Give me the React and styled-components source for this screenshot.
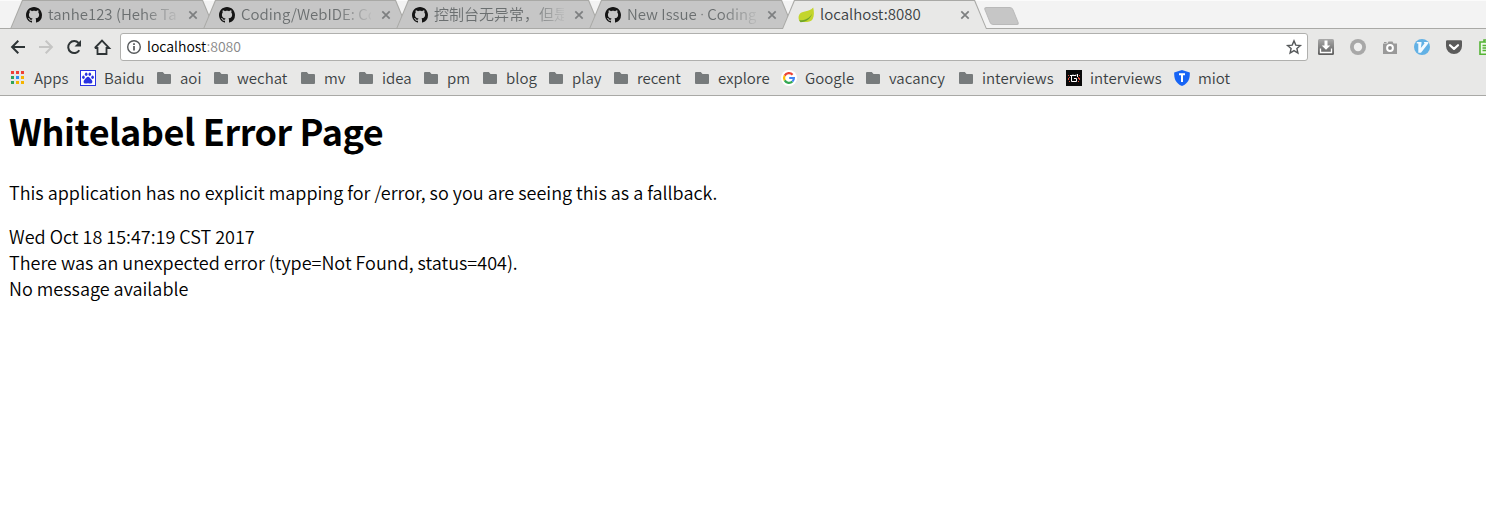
import React from "react";
import styled, { createGlobalStyle } from "styled-components";

const uiFont = '"Noto Sans CJK SC", "Noto Sans", sans-serif';

const GlobalStyle = createGlobalStyle`
  * { box-sizing: border-box; }
  body { margin: 0; background: #fff; overflow: hidden; font-family: ${uiFont}; font-weight: 350; }
`;

const Browser = styled.div`
  width: 100%;
  height: 100vh;
  display: flex;
  flex-direction: column;
  overflow: hidden;
`;

const TabStrip = styled.header`
  display: flex;
  flex: none;
  height: 29px;
  padding-left: 10px;
  background: #f3f3f3;
  box-shadow: inset 0 1px #fbfbfb, inset 0 -1px #a9a9a6;
`;

const TabItem = styled.div`
  position: relative;
  z-index: ${(p) => (p.$active ? 2 : 1)};
  flex: none;
  display: flex;
  align-items: center;
  width: 205px;
  height: 29px;
  margin-right: -12px;
  padding: 0 14px 0 16px;
  color: ${(p) => (p.$active ? "#3a4042" : "#6b6f70")};

  &::before, &::after {
    content: "";
    position: absolute;
    inset: 0;
    z-index: -1;
  }
  &::before {
    background: #a9a9a6;
    clip-path: polygon(0 100%, 12px 0, 193px 0, 100% 100%);
  }
  &::after {
    background: ${(p) => (p.$active ? "#e8e8e7" : "#c6c6c6")};
    clip-path: ${(p) =>
      p.$active
        ? "polygon(1px 100%, 12.8px 1px, 192.2px 1px, 204px 100%)"
        : "polygon(1.4px 28px, 12.8px 1px, 192.2px 1px, 203.6px 28px)"};
  }
`;

const TabTitle = styled.span`
  width: 132px;
  margin: 0 7px 1px 6px;
  overflow: hidden;
  white-space: nowrap;
  font-size: 15px;
  line-height: 24px;
  ${(p) => p.$fade && "mask-image: linear-gradient(to right, #000 94px, transparent 134px);"}
`;

const Dot = styled.span`
  font-family: "Noto Sans", sans-serif;
`;

const NewTab = styled.div`
  width: 29px;
  height: 18px;
  margin: 7px 0 0 12px;
  border-radius: 3px;
  background: #c6c6c6;
  border: 1px solid #b9b9b9;
  transform: skewX(22deg);
`;

const Toolbar = styled.div`
  display: flex;
  flex: none;
  align-items: center;
  height: 36px;
  padding-left: 10px;
  background: #e8e8e7;
`;

const NavButtons = styled.nav`
  display: flex;
  flex: none;
  gap: 12px;
  width: 110px;
`;

const AddressBar = styled.div`
  display: flex;
  flex: none;
  align-items: center;
  width: 1188px;
  height: 28px;
  padding: 0 5px;
  border: 1px solid #b0b0ae;
  border-radius: 3px;
  background: #fff;
`;

const Url = styled.span`
  flex: 1;
  margin: 0 0 2px 5px;
  font-size: 14px;
  line-height: 20px;
  color: #000;
`;

const Port = styled.span`
  color: #888;
`;

const Extensions = styled.div`
  display: flex;
  flex: none;
  gap: 16px;
  margin-left: 10px;
`;

const BookmarksBar = styled.div`
  display: flex;
  flex: none;
  align-items: center;
  height: 31px;
  padding: 0 0 4px 10px;
  background: #e8e8e7;
  border-bottom: 1px solid #a9a9a6;
`;

const BookmarkItem = styled.div`
  display: flex;
  flex: none;
  align-items: center;
  gap: 8px;
  width: ${(p) => p.$width}px;
  color: #3a4042;
  font-size: 15px;
  line-height: 24px;
  white-space: nowrap;
`;

const Glyph = styled.svg`
  display: block;
  flex: none;
  width: 16px;
  height: 16px;
  overflow: visible;
`;

const Page = styled.main`
  flex: 1;
  padding: 0 9px;
  color: #000;
  font-size: 18px;
  line-height: 26px;
`;

const Heading = styled.h1`
  margin: 8px 0 22px;
  font-size: 36px;
  line-height: 53px;
  font-weight: 700;
  letter-spacing: -0.44px;
`;

const Paragraph = styled.p`
  margin: 0 0 18px;
`;

const GitHubIcon = () => (
  <Glyph viewBox="0 0 16 16">
    <path fill="#151515" d="M8 0C3.58 0 0 3.58 0 8c0 3.54 2.29 6.53 5.47 7.59.4.07.55-.17.55-.38 0-.19-.01-.82-.01-1.49-2.01.37-2.53-.49-2.69-.94-.09-.23-.48-.94-.82-1.13-.28-.15-.68-.52-.01-.53.63-.01 1.08.58 1.23.82.72 1.21 1.87.87 2.33.66.07-.52.28-.87.51-1.07-1.78-.2-3.64-.89-3.64-3.95 0-.87.31-1.59.82-2.15-.08-.2-.36-1.02.08-2.12 0 0 .67-.21 2.2.82.64-.18 1.32-.27 2-.27s1.36.09 2 .27c1.53-1.04 2.2-.82 2.2-.82.44 1.1.16 1.92.08 2.12.51.56.82 1.27.82 2.15 0 3.07-1.87 3.75-3.65 3.95.29.25.54.73.54 1.48 0 1.07-.01 1.93-.01 2.2 0 .21.15.46.55.38A8.01 8.01 0 0 0 16 8c0-4.42-3.58-8-8-8z" />
  </Glyph>
);

const LeafIcon = () => (
  <Glyph viewBox="0 0 16 16">
    <path fill="#c3d52c" d="M15.200 .6c.9 3.700 1.200 8.500-.6 11.600-2 3.200-7.600 3-12.600 2.600C.2 13 .1 9.300 1.500 7.300 4 3.800 11.500 5.200 15.200 .6z" />
    <path fill="#6ea52b" d="M1.200 13.300c5 .3 9.800-1.300 12.800-6.500-1.300 5-5.500 8-11.500 8.500z" />
  </Glyph>
);

const CloseIcon = () => (
  <Glyph viewBox="0 0 16 16">
    <path d="M4.300 4.300l7.400 7.400M11.700 4.300l-7.400 7.400" stroke="#7d7f80" strokeWidth="1.700" />
  </Glyph>
);

const BackIcon = ({ color = "#2e3436", flip = false }) => (
  <Glyph viewBox="0 0 16 16">
    <path transform={flip ? "matrix(-1 0 0 1 16 0)" : undefined} d="M15 8H2.500M8.300 1.800L2.100 8l6.200 6.200" fill="none" stroke={color} strokeWidth="2" />
  </Glyph>
);

const ReloadIcon = () => (
  <Glyph viewBox="0 0 16 16">
    <path d="M13.300 11.300A6 6 0 1 1 12.600 4" fill="none" stroke="#2e3436" strokeWidth="2" />
    <path d="M15 1v6.500H8.500z" fill="#2e3436" />
  </Glyph>
);

const HomeIcon = () => (
  <Glyph viewBox="0 0 16 16">
    <path d="M3.500 8v7h9V8M.8 9L8 1.600 15.200 9H12.500M3.500 9H.8" fill="none" stroke="#2e3436" strokeWidth="1.800" />
  </Glyph>
);

const InfoIcon = () => (
  <Glyph viewBox="0 0 16 16">
    <circle cx="8" cy="8" r="6.300" fill="none" stroke="#55585a" strokeWidth="1.400" />
    <path d="M8 7v4.500M8 4.300v1.700" stroke="#55585a" strokeWidth="1.700" />
  </Glyph>
);

const StarIcon = () => (
  <Glyph viewBox="0 0 16 16">
    <path d="M8 1.900l1.800 4.200 4.600.4-3.500 3 1 4.500L8 11.600 4.100 14l1-4.500-3.500-3 4.600-.4z" fill="none" stroke="#55585a" strokeWidth="1.400" />
  </Glyph>
);

const DownloadIcon = () => (
  <Glyph viewBox="0 0 16 16">
    <defs>
      <linearGradient id="dl" x2="0" y2="1">
        <stop stopColor="#aaa" />
        <stop offset="1" stopColor="#5c5c5c" />
      </linearGradient>
    </defs>
    <rect width="16" height="16" rx="1.500" fill="url(#dl)" />
    <path d="M6.500 1.500h3v5h2.800L8 10.800 3.700 6.500h2.800z" fill="#fff" />
    <path d="M2.500 9.500v4h11v-4" fill="none" stroke="#fff" strokeWidth="1.300" />
  </Glyph>
);

const RingIcon = () => (
  <Glyph viewBox="0 0 16 16">
    <circle cx="8" cy="8" r="8" fill="#a8a8a8" />
    <circle cx="8" cy="8" r="4.200" fill="#efefef" />
  </Glyph>
);

const CameraIcon = () => (
  <Glyph viewBox="0 0 16 16">
    <path d="M1.500 4.500h4l1-2h4l1 2h3.500v10.500h-14v-10zM2 3h2.500v1H2z" fill="#999" />
    <circle cx="8" cy="9" r="2.900" fill="#8a8a8a" stroke="#fff" strokeWidth="2" />
  </Glyph>
);

const VimIcon = () => (
  <Glyph viewBox="0 0 16 16">
    <circle cx="8" cy="8" r="8" fill="#62b1e5" />
    <path d="M2.800 3h4.700v1.500L6.800 9l3.700-4.500L9.800 3h4.400v1.600L7 13.800H4.300V4.500H2.800z" fill="#f4faff" />
  </Glyph>
);

const PocketIcon = () => (
  <Glyph viewBox="0 0 16 16">
    <path d="M1.200 1.300h13.600a1.200 1.200 0 0 1 1.200 1.200V7a8 8 0 0 1-16 0V2.500a1.200 1.200 0 0 1 1.200-1.200z" fill="#5b5b5b" />
    <path d="M4 6.200L8 9.900l4-3.700" fill="none" stroke="#fff" strokeWidth="2.200" strokeLinecap="round" strokeLinejoin="round" />
  </Glyph>
);

const ClipboardIcon = () => (
  <Glyph viewBox="0 0 16 16">
    <path d="M2 3h12v12.200H2zM6 3V1h4v2" fill="#eef7e9" stroke="#54b435" strokeWidth="1.600" />
    <path d="M4.500 6.500h7M4.500 9h7M4.500 11.500h7" stroke="#54b435" strokeWidth="1.300" />
  </Glyph>
);

const AppsIcon = () => {
  const colors = ["#ef4136", "#ef4136", "#ef4136", "#2fa35a", "#2f8ff0", "#f5b400", "#2fa35a", "#f5b400", "#f5b400"];
  return (
    <Glyph viewBox="0 0 16 16">
      {colors.map((c, i) => (
        <rect key={i} x={1 + (i % 3) * 5} y={1 + Math.floor(i / 3) * 5} width="3" height="3" fill={c} />
      ))}
    </Glyph>
  );
};

const BaiduIcon = () => (
  <Glyph viewBox="0 0 16 16">
    <rect x=".5" y=".5" width="15" height="15" fill="#fff" stroke="#2932e1" />
    <g fill="#2932e1">
      <ellipse cx="3.400" cy="7.200" rx="1.300" ry="1.700" />
      <ellipse cx="6.200" cy="4.200" rx="1.300" ry="1.800" />
      <ellipse cx="9.800" cy="4.200" rx="1.300" ry="1.800" />
      <ellipse cx="12.600" cy="7.200" rx="1.300" ry="1.700" />
      <path d="M8 6.800c1.500 0 2 1.500 3.300 2.600 1.800 1.600 1.200 4.100-.8 4.100-1 0-1.500-.3-2.500-.3s-1.500.3-2.500.3c-2 0-2.600-2.500-.8-4.100C6 8.300 6.500 6.800 8 6.800z" />
    </g>
  </Glyph>
);

const FolderIcon = () => (
  <Glyph viewBox="0 0 16 16">
    <path d="M2 2h4.800l1.700 2H14a1 1 0 0 1 1 1v8a1 1 0 0 1-1 1H2a1 1 0 0 1-1-1V3a1 1 0 0 1 1-1z" fill="#777b7c" />
  </Glyph>
);

const GoogleIcon = () => (
  <Glyph viewBox="0 0 16 16">
    <circle cx="8" cy="8" r="8" fill="#fff" />
    <g fill="none" strokeWidth="2.200">
      <path d="M3.700 5.600A4.900 4.900 0 0 1 11.600 4.700" stroke="#ea4335" />
      <path d="M3.700 5.600a4.900 4.900 0 0 0 0 4.800" stroke="#fbbc05" />
      <path d="M3.700 10.400a4.900 4.900 0 0 0 7.700 1.100" stroke="#34a853" />
      <path d="M11.400 11.500A4.900 4.900 0 0 0 12.900 8H8.200" stroke="#4285f4" />
    </g>
  </Glyph>
);

const PixelIcon = () => (
  <Glyph viewBox="0 0 16 16">
    <rect width="16" height="16" fill="#0a0a0a" />
    <path d="M4 5.500h3v-1M7 5.500h3v-1M5.500 5.500v6h5v-3H8M11.500 4v3" fill="none" stroke="#fff" />
    <path d="M2 5.500h1M3 7.500h1M2 9.500h1M13 5.500h1M12 7.500h1M13 9.500h1M12 11.500h1M3 11.500h1M12 8.500h2M2 8.500h1" stroke="#e0503c" />
  </Glyph>
);

const ShieldIcon = () => (
  <Glyph viewBox="0 0 16 16">
    <path d="M8 0l7.800 2.400C16 8.500 14.600 13 8 16 1.400 13 0 8.500.2 2.400z" fill="#1764f5" />
    <path d="M5 4.200h6M8 4.200V12" stroke="#fff" strokeWidth="2" />
  </Glyph>
);

const tabs = [
  { id: "profile", title: "tanhe123 (Hehe Tan" },
  { id: "repo", title: "Coding/WebIDE: Co" },
  { id: "issue", title: "控制台无异常，但是" },
  { id: "new", title: <>New Issue <Dot>·</Dot> Coding</> },
  { id: "local", title: "localhost:8080", active: true },
];

const bookmarks = [
  ["Apps", 70, AppsIcon],
  ["Baidu", 76, BaiduIcon],
  ["aoi", 57],
  ["wechat", 87],
  ["mv", 58],
  ["idea", 65],
  ["pm", 59],
  ["blog", 66],
  ["play", 65],
  ["recent", 81],
  ["explore", 87],
  ["Google", 84, GoogleIcon],
  ["vacancy", 93],
  ["interviews", 108],
  ["interviews", 108, PixelIcon],
  ["miot", 70, ShieldIcon],
];

export default function App() {
  return (
    <Browser>
      <GlobalStyle />
      <TabStrip>
        {tabs.map((tab) => (
          <TabItem key={tab.id} $active={tab.active}>
            {tab.active ? <LeafIcon /> : <GitHubIcon />}
            <TabTitle $fade={!tab.active}>{tab.title}</TabTitle>
            <CloseIcon />
          </TabItem>
        ))}
        <NewTab />
      </TabStrip>
      <Toolbar>
        <NavButtons>
          <BackIcon />
          <BackIcon flip color="#c5c5c4" />
          <ReloadIcon />
          <HomeIcon />
        </NavButtons>
        <AddressBar>
          <InfoIcon />
          <Url>localhost<Port>:8080</Port></Url>
          <StarIcon />
        </AddressBar>
        <Extensions>
          <DownloadIcon />
          <RingIcon />
          <CameraIcon />
          <VimIcon />
          <PocketIcon />
          <ClipboardIcon />
        </Extensions>
      </Toolbar>
      <BookmarksBar>
        {bookmarks.map(([label, width, Icon = FolderIcon], i) => (
          <BookmarkItem key={i} $width={width}>
            <Icon />
            {label}
          </BookmarkItem>
        ))}
      </BookmarksBar>
      <Page>
        <Heading>Whitelabel Error Page</Heading>
        <Paragraph>This application has no explicit mapping for /error, so you are seeing this as a fallback.</Paragraph>
        <div>Wed Oct 18 15:47:19 CST 2017</div>
        <div>There was an unexpected error (type=Not Found, status=404).</div>
        <div>No message available</div>
      </Page>
    </Browser>
  );
}
